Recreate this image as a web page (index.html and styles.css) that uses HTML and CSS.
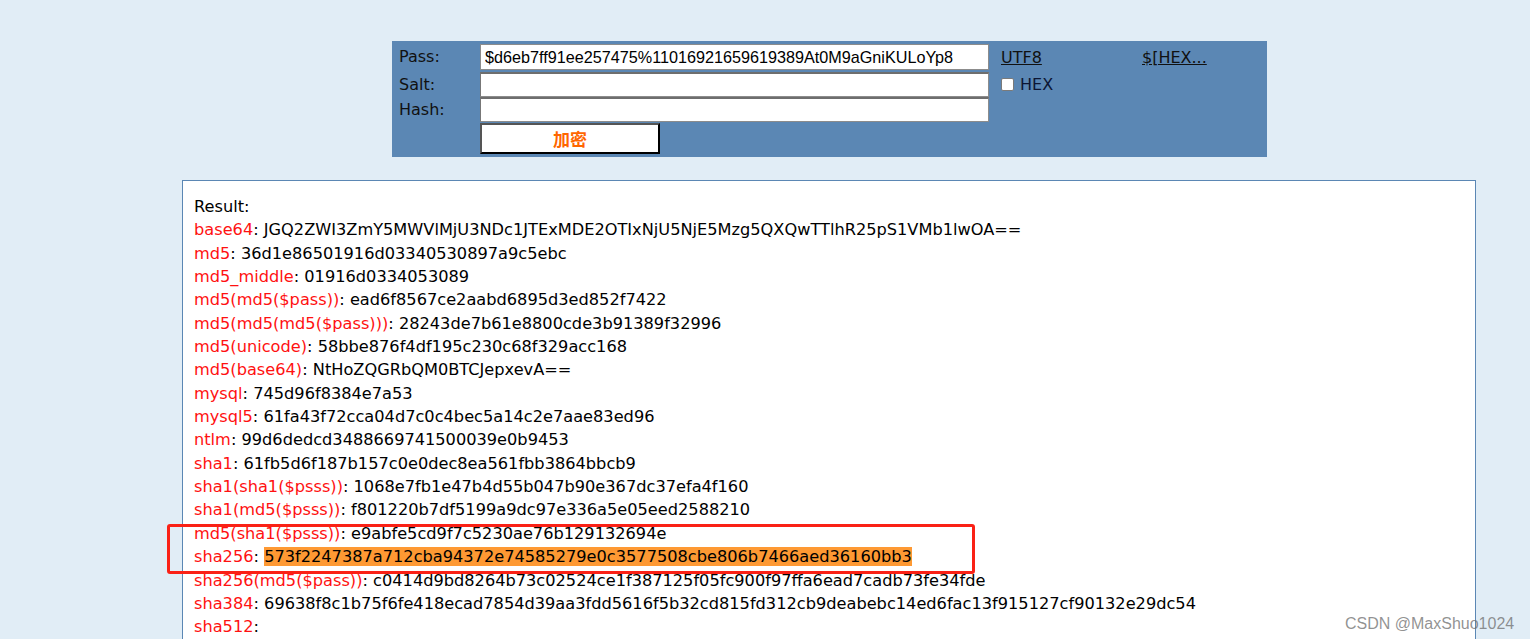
FILE: index.html
```html
<!DOCTYPE html>
<html>
<head>
<meta charset="utf-8">
<link rel="stylesheet" href="styles.css">
</head>
<body>
<div class="page">
  <form class="panel">
    <div class="label">Pass:</div>
    <input class="field" type="text" value="$d6eb7ff91ee257475%11016921659619389At0M9aGniKULoYp8">
    <a class="link" href="#">UTF8</a>
    <a class="link" href="#">$[HEX...</a>

    <div class="label">Salt:</div>
    <input class="field inset" type="text" value="">
    <label class="hexopt"><span class="box"></span>HEX</label>
    <div></div>

    <div class="label">Hash:</div>
    <input class="field inset" type="text" value="">
    <div></div>
    <div></div>

    <div></div>
    <button class="btn" type="button">加密</button>
  </form>

  <div class="result">
    <div class="line">Result:</div>
    <div class="line"><span class="k">base64</span>: JGQ2ZWI3ZmY5MWVlMjU3NDc1JTExMDE2OTIxNjU5NjE5Mzg5QXQwTTlhR25pS1VMb1lwOA==</div>
    <div class="line"><span class="k">md5</span>: 36d1e86501916d03340530897a9c5ebc</div>
    <div class="line"><span class="k">md5_middle</span>: 01916d0334053089</div>
    <div class="line"><span class="k">md5(md5($pass))</span>: ead6f8567ce2aabd6895d3ed852f7422</div>
    <div class="line"><span class="k">md5(md5(md5($pass)))</span>: 28243de7b61e8800cde3b91389f32996</div>
    <div class="line"><span class="k">md5(unicode)</span>: 58bbe876f4df195c230c68f329acc168</div>
    <div class="line"><span class="k">md5(base64)</span>: NtHoZQGRbQM0BTCJepxevA==</div>
    <div class="line"><span class="k">mysql</span>: 745d96f8384e7a53</div>
    <div class="line"><span class="k">mysql5</span>: 61fa43f72cca04d7c0c4bec5a14c2e7aae83ed96</div>
    <div class="line"><span class="k">ntlm</span>: 99d6dedcd3488669741500039e0b9453</div>
    <div class="line"><span class="k">sha1</span>: 61fb5d6f187b157c0e0dec8ea561fbb3864bbcb9</div>
    <div class="line"><span class="k">sha1(sha1($psss))</span>: 1068e7fb1e47b4d55b047b90e367dc37efa4f160</div>
    <div class="line"><span class="k">sha1(md5($psss))</span>: f801220b7df5199a9dc97e336a5e05eed2588210</div>
    <div class="marked">
      <div class="line"><span class="k">md5(sha1($psss))</span>: e9abfe5cd9f7c5230ae76b129132694e</div>
      <div class="line"><span class="k">sha256</span>: <span class="hl">573f2247387a712cba94372e74585279e0c3577508cbe806b7466aed36160bb3</span></div>
      <div class="redbox"></div>
    </div>
    <div class="line"><span class="k">sha256(md5($pass))</span>: c0414d9bd8264b73c02524ce1f387125f05fc900f97ffa6ead7cadb73fe34fde</div>
    <div class="line"><span class="k">sha384</span>: 69638f8c1b75f6fe418ecad7854d39aa3fdd5616f5b32cd815fd312cb9deabebc14ed6fac13f915127cf90132e29dc54</div>
    <div class="line"><span class="k">sha512</span>:</div>
  </div>
</div>
<div class="watermark">CSDN @MaxShuo1024</div>
</body>
</html>
```

FILE: styles.css
```css
html, body {
  margin: 0;
  padding: 0;
  height: 100%;
  overflow: hidden;
}
body {
  background: #e1edf6;
  font-family: "DejaVu Sans", Verdana, sans-serif;
  font-size: 16px;
  color: #000;
  position: relative;
}
.page {
  padding-top: 41px;
}
.panel {
  margin: 0 0 0 392px;
  width: 868px;
  height: 113px;
  padding: 3px 0 0 7px;
  background: #5b87b4;
  display: grid;
  grid-template-columns: 81px 509px 153px 1fr;
  grid-template-rows: 28px 25px 26px 31px;
  align-items: start;
}
.label {
  font-size: 16px;
  line-height: 26px;
  color: #111;
}
.field {
  box-sizing: border-box;
  width: 509px;
  height: 26px;
  margin: 0;
  padding: 0 4px;
  border: 1px solid #8c8c8c;
  background: #fff;
  font-family: "Liberation Sans", Arial, sans-serif;
  font-size: 16.2px;
  color: #000;
  outline: none;
}
.field.inset {
  height: 25px;
  border-top: 2px solid #6e6e6e;
  border-left: 1px solid #777;
}
.link {
  margin-left: 12px;
  color: #111;
  text-decoration: underline;
  line-height: 28px;
  font-size: 16px;
}
.link + .link {
  margin-left: 0;
}
.hexopt {
  margin-left: 12px;
  display: flex;
  align-items: center;
  gap: 6px;
  color: #0c1533;
  height: 25px;
}
.box {
  display: inline-block;
  width: 11px;
  height: 11px;
  border: 1px solid #7a7a7a;
  border-radius: 2px;
  background: #fff;
}
.btn {
  box-sizing: border-box;
  width: 180px;
  height: 31px;
  padding: 0;
  background: #fff;
  border: 2px solid;
  border-color: #555 #000 #000 #555;
  color: #ff6600;
  font-family: "Noto Sans CJK SC", sans-serif;
  font-weight: bold;
  font-size: 17px;
  line-height: 26px;
}
.result {
  margin: 23px 0 0 182px;
  width: 1281px;
  height: 600px;
  padding: 14px 0 0 11px;
  background: #fff;
  border: 1px solid #5b87b4;
  font-size: 16.2px;
}
.line {
  line-height: 23.35px;
  height: 23.35px;
  white-space: nowrap;
}
.k {
  color: #ff1111;
}
.hl {
  background: #fe9933;
}
.marked {
  position: relative;
}
.redbox {
  position: absolute;
  left: -27px;
  top: 2px;
  width: 802px;
  height: 44px;
  border: 3px solid #fa2116;
  border-radius: 3px;
}
.watermark {
  position: absolute;
  left: 1345px;
  top: 615px;
  font-family: "Liberation Sans", Arial, sans-serif;
  font-size: 16px;
  color: rgba(110, 110, 110, 0.75);
  white-space: nowrap;
}
```
